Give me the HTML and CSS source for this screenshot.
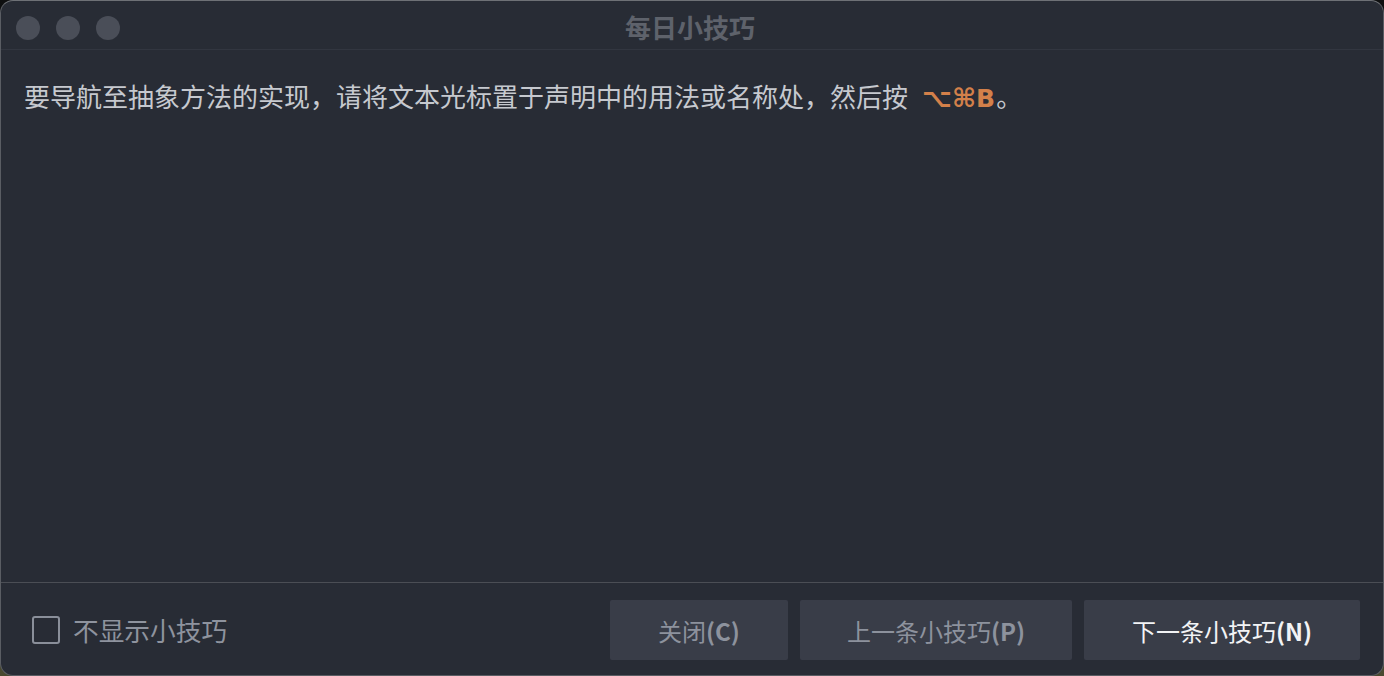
FILE: index.html
```html
<!DOCTYPE html>
<html lang="zh">
<head>
<meta charset="utf-8">
<title>每日小技巧</title>
<link rel="stylesheet" href="styles.css">
</head>
<body>
<div class="window">
  <div class="titlebar">
    <div class="lights">
      <span class="light"></span>
      <span class="light"></span>
      <span class="light"></span>
    </div>
    <div class="title">每日小技巧</div>
  </div>
  <div class="content">
    <p class="tip">要导航至抽象方法的实现，请将文本光标置于声明中的用法或名称处，然后按<span class="key"><span class="sym">⌥⌘</span>B</span>。</p>
  </div>
  <div class="footer">
    <label class="check">
      <span class="box"></span>
      <span class="check-label">不显示小技巧</span>
    </label>
    <div class="buttons">
      <button class="btn btn-close">关闭<b>(C)</b></button>
      <button class="btn btn-prev">上一条小技巧<b>(P)</b></button>
      <button class="btn btn-next">下一条小技巧<b>(N)</b></button>
    </div>
  </div>
</div>
</body>
</html>
```
FILE: styles.css
```css
* { box-sizing: border-box; }
html, body {
  margin: 0;
  width: 1384px;
  height: 676px;
  overflow: hidden;
}
body {
  background: linear-gradient(#0e0f10, #2a2b22 60%, #4a4a30);
  font-family: "Noto Sans CJK SC", "Noto Sans", sans-serif;
}
.window {
  width: 1384px;
  height: 676px;
  background: #282c35;
  border: 1px solid #5a5d63;
  border-top-color: #6e7176;
  border-radius: 13px;
  display: flex;
  flex-direction: column;
  overflow: hidden;
}
.titlebar {
  height: 49px;
  flex: none;
  border-bottom: 1px solid #323640;
  display: flex;
  align-items: center;
  position: relative;
}
.lights {
  display: flex;
  gap: 16px;
  padding-left: 15px;
  padding-top: 6px;
}
.light {
  width: 24px;
  height: 24px;
  border-radius: 50%;
  background: #4a4e58;
}
.title {
  position: absolute;
  left: 0;
  right: 0;
  top: 4px;
  padding-right: 4px;
  text-align: center;
  font-size: 26px;
  font-weight: 700;
  color: #5e626b;
  line-height: 44px;
}
.content {
  flex: 1;
  padding: 26px 23px;
}
.tip {
  margin: 0;
  font-size: 26px;
  line-height: 40px;
  color: #c6c9cf;
}
.key {
  color: #d3804a;
  font-weight: 700;
  font-family: "DejaVu Sans", "Noto Sans", sans-serif;
  font-size: 25px;
  margin-left: 14px;
  margin-right: 1px;
}
.sym {
  font-size: 26px;
  letter-spacing: 0;
}
.footer {
  flex: none;
  height: 93px;
  border-top: 1px solid #4b4e55;
  display: flex;
  align-items: flex-start;
  justify-content: space-between;
  padding: 17px 23px 0 31px;
}
.check {
  display: flex;
  align-items: center;
  gap: 13px;
  height: 60px;
}
.box {
  width: 28px;
  height: 28px;
  border: 2.5px solid #8a8f9a;
  border-radius: 3px;
}
.check-label {
  font-size: 25.7px;
  color: #8e939e;
  line-height: 30px;
}
.buttons {
  display: flex;
  gap: 12px;
}
.btn {
  height: 60px;
  border: none;
  border-radius: 2px;
  background: #393d48;
  font-family: "Noto Sans CJK SC", "Noto Sans", sans-serif;
  font-size: 24px;
  color: #8d929d;
  padding: 0;
  text-align: center;
}
.btn b { font-weight: 700; }
.btn-close { width: 178px; }
.btn-prev { width: 272px; }
.btn-next { width: 276px; color: #f2f3f5; }
```
